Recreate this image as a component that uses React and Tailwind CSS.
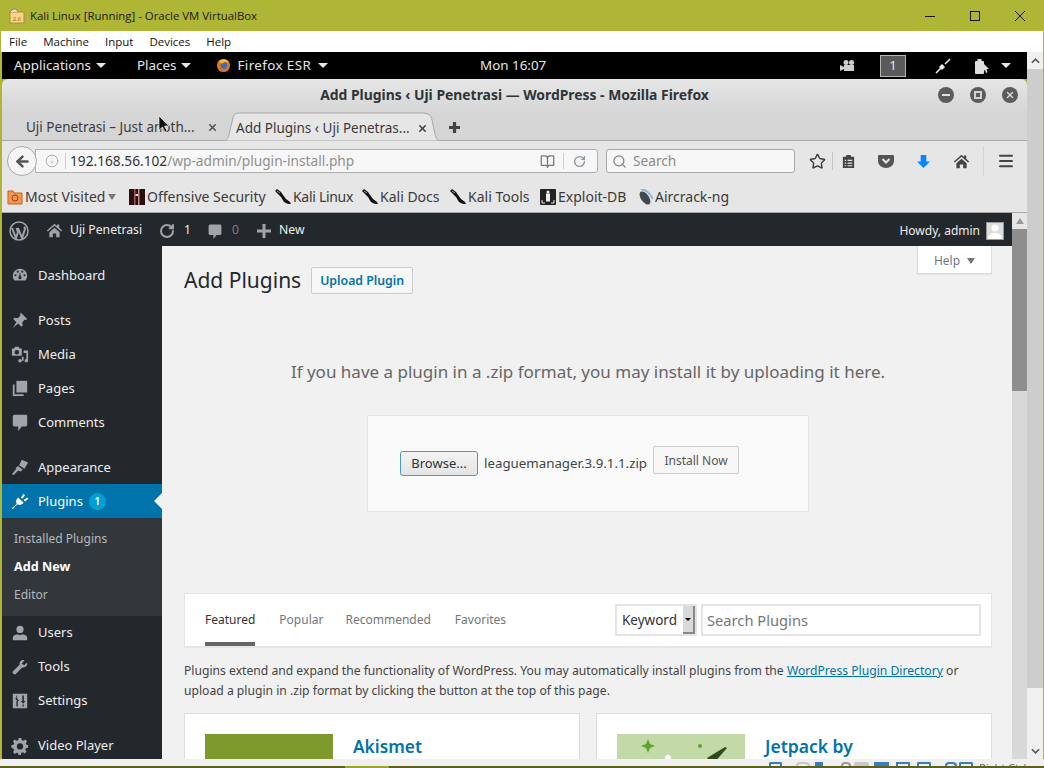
import { ArrowLeft, Info, RotateCw, Search, Star, Menu, BookOpen, X } from 'lucide-react'

const FONT = "font-['Noto_Sans',sans-serif]"

const MENU_TOP = [
  { label: 'Dashboard', icon: 'dash', gap: 'mb-[11px]' },
  { label: 'Posts', icon: 'pin' },
  { label: 'Media', icon: 'media' },
  { label: 'Pages', icon: 'pages' },
  { label: 'Comments', icon: 'comment', gap: 'mb-[11px]' },
  { label: 'Appearance', icon: 'brush' },
]

const MENU_BOTTOM = [
  { label: 'Users', icon: 'user' },
  { label: 'Tools', icon: 'wrench' },
  { label: 'Settings', icon: 'sliders', gap: 'mb-[11px]' },
  { label: 'Video Player', icon: 'gear' },
]

const BOOKMARKS = [
  { label: 'Offensive Security', icon: 'offsec', w: 'w-[146px]' },
  { label: 'Kali Linux', icon: 'kali', w: 'w-[87px] tracking-[-0.3px]' },
  { label: 'Kali Docs', icon: 'kali', w: 'w-[88px]' },
  { label: 'Kali Tools', icon: 'kali', w: 'w-[90px]' },
  { label: 'Exploit-DB', icon: 'exploit', w: 'w-[97px]' },
  { label: 'Aircrack-ng', icon: 'air', w: 'w-[90px]' },
]

const HOUSE = 'M10 2l3 2.600V3h2.500v3.800L19 10l-1.200 1.200L10 4.500l-7.800 6.700L1 10zM4 12l6-5.200 6 5.200v6h-4v-4.500H8V18H4z'

function WpIcon({ name }) {
  const cls = 'w-[18px] h-[18px] fill-[#a0a5aa]'
  if (name === 'dash') return (
    <svg viewBox="0 0 20 20" className={cls}><path fillRule="evenodd" d="M10 3a8 8 0 0 0-8 8c0 2 .7 3.800 1.900 5h12.200A8 8 0 0 0 18 11a8 8 0 0 0-8-8zm-5 8.500a1.200 1.200 0 1 1 0-2.400 1.200 1.200 0 0 1 0 2.400zM7.500 7.500a1.200 1.200 0 1 1 0-2.400 1.200 1.200 0 0 1 0 2.400zM10 14.800a1.800 1.800 0 0 1-1-3.300l1-4.500.9 4.500a1.800 1.800 0 0 1-.9 3.300zM12.500 7.500a1.200 1.200 0 1 1 0-2.400 1.200 1.200 0 0 1 0 2.400zM15 11.500a1.200 1.200 0 1 1 0-2.400 1.200 1.200 0 0 1 0 2.400z" /></svg>
  )
  if (name === 'pin') return (
    <svg viewBox="0 0 20 20" className={cls}><path d="M11 2l7 7-1.500 1-1-.5-3 3 .5 3.500-1.500 1.500-3.500-3.500L2 19l4-6.500L2.500 9 4 7.500l3.500.5 3-3-.5-1z" /></svg>
  )
  if (name === 'media') return (
    <svg viewBox="0 0 20 20" className={cls}><path fillRule="evenodd" d="M1 4h2.500l1-2h4l1 2H12v8H1V4zm5.500 1.500a2.500 2.500 0 1 0 0 5 2.500 2.500 0 0 0 0-5z" /><path d="M14 6h5v11.500a2 2 0 1 1-2-2V9h-3zM8 17.500a2 2 0 1 1 4 0 2 2 0 0 1-4 0zM12 13h2v4.500h-2z" /></svg>
  )
  if (name === 'pages') return (
    <svg viewBox="0 0 20 20" className={cls}><path d="M6 2h12v13H6z" /><path d="M2 6h2v11h10v2H2z" /></svg>
  )
  if (name === 'comment') return (
    <svg viewBox="0 0 20 20" className={cls}><path d="M4 2h13a2 2 0 0 1 1 2v9a2 2 0 0 1-2 2h-4l-4 5v-5H4a2 2 0 0 1-2-2V4a2 2 0 0 1 2-2z" /></svg>
  )
  if (name === 'brush') return (
    <svg viewBox="0 0 20 20" className={cls}><path d="M12 2l7 3-4 7-6-4zM8 9l5 4-2 2-3-1-5 5-2-1 5-6-1-1z" /></svg>
  )
  if (name === 'user') return (
    <svg viewBox="0 0 20 20" className={cls}><circle cx="10" cy="6" r="4" /><path d="M2 18v-3c0-2 3-3 5-3.500 1.500 1 4.500 1 6 0 2 .5 5 1.500 5 3.500v3z" /></svg>
  )
  if (name === 'wrench') return (
    <svg viewBox="0 0 20 20" className={cls}><path d="M18 5l-3.500 3L12 6l3-3.500C12 1.500 9 4 9.500 7.500L2 15c-1 1.500 1.500 4 3 3l7.500-7.500C16 11 18.800 8 18 5z" /></svg>
  )
  if (name === 'sliders') return (
    <svg viewBox="0 0 20 20" className={cls}><path fillRule="evenodd" d="M2 2h16v16H2zM6 4v3H4.500L7 10l-1 0v6h1.500v-6H9L6.800 7V4zm6.500 0v6H11l2.500 3 2.500-3h-1.700V4zm.3 10v2h1.400v-2z" /></svg>
  )
  return (
    <svg viewBox="0 0 20 20" className={cls}><path fillRule="evenodd" d="M8.500 1h3l.5 2.500 1.600.7 2.200-1.400 2 2-1.400 2.200.7 1.600L19 9v3l-2.400.5-.7 1.600 1.400 2.200-2 2-2.200-1.400-1.600.7-.5 2.400h-3L8 18.100l-1.600-.7-2.200 1.400-2-2 1.400-2.200-.7-1.600L.5 12V9l2.400-.5.7-1.600-1.400-2.200 2-2 2.200 1.400L8 3.500zM10 7a3.500 3.500 0 1 0 0 7 3.500 3.500 0 0 0 0-7z" /></svg>
  )
}

function BookmarkIcon({ name }) {
  if (name === 'offsec') return (
    <svg viewBox="0 0 16 16" className="w-4 h-4 mr-[2px] shrink-0"><rect width="16" height="16" fill="#2a0f10" /><rect x="5" width="1.500" height="16" fill="#9c5a5a" /><rect x="9" width="1.500" height="16" fill="#c98a8a" /><rect x="6.500" y="5" width="2.500" height="2" fill="#e8d8d8" /></svg>
  )
  if (name === 'kali') return (
    <svg viewBox="0 0 16 16" className="w-4 h-4 mr-[2px] shrink-0"><path d="M0 2l2-2 4 3 2 3 3 4 4 3 1 2-3 0-4-2-3-5-3-3z" fill="#111" /><path d="M2 2l3 2" stroke="#999" strokeWidth="1" /></svg>
  )
  if (name === 'exploit') return (
    <svg viewBox="0 0 16 16" className="w-4 h-4 mr-[2px] shrink-0"><rect width="16" height="16" rx="1" fill="#222" /><rect x="6" y="4.500" width="4" height="8" fill="#eee" /><circle cx="8" cy="3" r="1.500" fill="#eee" /><path d="M2 11v3h3M14 11v3h-3" stroke="#eee" fill="none" /></svg>
  )
  return (
    <svg viewBox="0 0 16 16" className="w-4 h-4 mr-[2px] shrink-0"><ellipse cx="8" cy="9" rx="4" ry="7.500" transform="rotate(-35 8 9)" fill="#3f4a50" /><path d="M4 0c5 1 9 4 12 10" stroke="#8fb8e0" strokeWidth="2" fill="none" /></svg>
  )
}

function Caret({ className = '' }) {
  return <span className={`w-0 h-0 border-x-[5px] border-x-transparent border-t-[5px] border-t-[#e6e6e6] ${className}`} />
}

function TitleBar() {
  return (
    <div className="h-[31px] bg-[#afb535] flex items-center shrink-0 pl-[9px] pr-[19px] font-['Open_Sans',sans-serif] text-[11.4px] text-[#1a1a1a]">
      <svg viewBox="0 0 16 16" className="w-4 h-4 mr-[5px]">
        <rect x="1" y="4" width="14" height="11" fill="#f4d58a" stroke="#b8873a" />
        <path d="M1 4l3-3h3l2 3" fill="#ddd" stroke="#888" />
        <text x="8" y="13" textAnchor="middle" fontSize="6" fill="#a35a00">2.6</text>
      </svg>
      <span>Kali Linux [Running] - Oracle VM VirtualBox</span>
      <div className="ml-auto flex items-center gap-[35px]">
        <svg viewBox="0 0 10 10" className="w-[10px] h-[10px]"><path d="M0 5.500h10" stroke="#111" strokeWidth="1" /></svg>
        <svg viewBox="0 0 10 10" className="w-[10px] h-[10px]"><rect x="0.500" y="0.500" width="9" height="9" fill="none" stroke="#111" strokeWidth="1" /></svg>
        <svg viewBox="0 0 10 10" className="w-[10px] h-[10px]"><path d="M0 0l10 10M10 0L0 10" stroke="#111" strokeWidth="1" /></svg>
      </div>
    </div>
  )
}

function VmMenu() {
  return (
    <div className="h-[21px] bg-white ml-[1px] mr-[1px] flex items-center shrink-0 pl-[8px] gap-[16px] font-['Open_Sans',sans-serif] text-[11.5px] text-[#111]">
      {['File', 'Machine', 'Input', 'Devices', 'Help'].map(m => <span key={m}>{m}</span>)}
    </div>
  )
}

function GnomePanel() {
  return (
    <div className="relative h-[27px] bg-black flex items-center shrink-0 pl-[12px] pr-[16px] text-[#e6e6e6] text-[13.4px]">
      <span>Applications</span>
      <Caret className="ml-[5px]" />
      <span className="ml-[31px]">Places</span>
      <Caret className="ml-[5px]" />
      <svg viewBox="0 0 16 16" className="w-[15px] h-[15px] ml-[25px] mr-[6px]">
        <circle cx="8" cy="8" r="7" fill="#e8701a" />
        <circle cx="8.500" cy="8" r="3.600" fill="#3b6fb5" />
        <path d="M3 4c3-4 9-3 11 1-3-2-6-1-7 1z" fill="#f7b733" />
      </svg>
      <span className="tracking-[0.4px]">Firefox ESR</span>
      <Caret className="ml-[7px]" />
      <span className="absolute left-[478px] top-[3px]">Mon 16:07</span>
      <div className="ml-auto flex items-center">
        <svg viewBox="0 0 16 16" className="w-4 h-4 fill-[#cfcfcf] mr-[24px]">
          <circle cx="6" cy="4.500" r="2.500" /><circle cx="11.500" cy="4.500" r="2.500" /><rect x="4" y="7" width="10" height="6" /><path d="M0 7l4 2v2l-4 2z" />
        </svg>
        <span className="w-[26px] h-[22px] border border-[#b5b5b5] bg-[#5a5a5a] flex items-center justify-center text-[13px] mr-[29px]">1</span>
        <svg viewBox="0 0 16 16" className="w-4 h-4 mr-[23px]">
          <path d="M1 15l5-5M10 6l5-5" stroke="#eee" strokeWidth="1.500" /><path d="M4 9l3 3 3-3-3-3z" fill="#eee" />
        </svg>
        <svg viewBox="0 0 16 16" className="w-4 h-4 mr-[11px]">
          <rect x="1" y="3" width="9" height="13" rx="1" fill="#ddd" /><rect x="3.500" y="1" width="4" height="2" fill="#ddd" /><path d="M10 6l5 5-2.500.3 1 3-1.500.6-1-3-1.500 1z" fill="#ddd" />
        </svg>
        <Caret />
      </div>
    </div>
  )
}

function FirefoxChrome() {
  return (
    <div className="shrink-0">
      <div className="h-[32px] rounded-t-[6px] bg-gradient-to-b from-[#e6e6e6] to-[#d6d6d6] relative flex items-center justify-center font-bold text-[13.9px] text-[#2e3436]">
        Add Plugins ‹ Uji Penetrasi — WordPress - Mozilla Firefox
        <div className="absolute right-[9px] top-[8px] flex gap-[16px]">
          <span className="w-4 h-4 rounded-full bg-[#5c5c5c] flex items-center justify-center"><span className="w-2 h-[2px] bg-[#e0e0e0]" /></span>
          <span className="w-4 h-4 rounded-full bg-[#5c5c5c] flex items-center justify-center"><span className="w-[8px] h-[8px] border-2 border-[#d0d0d0]" /></span>
          <span className="w-4 h-4 rounded-full bg-[#5c5c5c] flex items-center justify-center"><X size={10} strokeWidth={3} className="text-[#e0e0e0]" /></span>
        </div>
      </div>
      <div className="h-[30px] bg-[#d5d5d5] border-b border-[#a8a8a8] flex items-end text-[13.5px] text-[#3a3a3a]">
        <div className="w-[222px] h-[29px] pt-[4px] flex items-center pl-[24px] pr-[6px] justify-between">
          <span>Uji Penetrasi – Just anoth...</span>
          <X size={11} strokeWidth={3.500} className="text-[#555]" />
        </div>
        <div className="relative w-[216px] h-[30px] pt-[4px] -mb-px flex items-center pl-[12px] pr-[12px] justify-between">
          <svg viewBox="0 0 216 30" className="absolute inset-0 w-[216px] h-[30px]">
            <path d="M0 30C4 29 5 25 6 19L9 7C10 3 12 2 16 2L198 2C204 2 207 4 208 9L211 23C212 28 214 30 216 30Z" fill="#e6e6e6" stroke="#a8a8a8" />
          </svg>
          <span className="relative">Add Plugins ‹ Uji Penetras...</span>
          <X size={11} strokeWidth={3.500} className="relative text-[#444]" />
        </div>
        <div className="h-[29px] pt-[4px] flex items-center pl-[9px]">
          <svg viewBox="0 0 12 12" className="w-[11px] h-[11px]"><path d="M6 0v12M0 6h12" stroke="#444" strokeWidth="3.500" /></svg>
        </div>
      </div>
      <div className="h-[38px] pt-[2px] bg-[#e6e6e6] flex items-center pl-[5px] pr-[10px] text-[13.7px]">
        <span className="w-[30px] h-[30px] rounded-full border border-[#a8a8a8] bg-[#f5f5f5] flex items-center justify-center z-10 shrink-0"><ArrowLeft size={17} strokeWidth={3.500} className="text-[#555]" /></span>
        <div className="w-[563px] h-[24px] -ml-[2px] bg-[#f7f7f7] border border-[#b0b0b0] rounded-r-[3px] flex items-center pl-[9px]">
          <Info size={14} className="text-[#999] mr-[6px]" strokeWidth={1.300} />
          <span className="w-px h-[16px] bg-[#ccc] mr-[4px]" />
          <span className="text-[#333]">192.168.56.102</span>
          <span className="text-[#909090]">/wp-admin/plugin-install.php</span>
          <BookOpen size={15} className="ml-auto text-[#777] mr-[8px]" />
          <span className="w-px h-[16px] bg-[#ccc] mr-[9px]" />
          <RotateCw size={13} strokeWidth={2.500} className="text-[#8a97a5] mr-[11px]" />
        </div>
        <div className="w-[189px] h-[24px] ml-[8px] bg-[#f7f7f7] border border-[#a8a8a8] rounded-[3px] flex items-center pl-[5px] text-[#8a8a8a]">
          <Search size={15} className="text-[#808080] mr-[6px]" strokeWidth={2} />
          <span>Search</span>
        </div>
        <Star size={17} strokeWidth={2} className="ml-[14px] text-[#3c3c3c]" />
        <span className="w-px h-[18px] bg-[#c4c4c4] ml-[6px]" />
        <svg viewBox="0 0 16 16" className="w-[15px] h-[15px] ml-[8px]"><path fillRule="evenodd" fill="#444" d="M2 3h3l1-2h4l1 2h3v12H2zM4 6v1.500h1.500V6zm3 0v1.500h5V6zM4 9v1.500h1.500V9zm3 0v1.500h5V9zm-3 3v1h1.500v-1zm3 0v1h5v-1z" /></svg>
        <svg viewBox="0 0 16 16" className="w-[16px] h-[16px] ml-[22px]"><path fill="#555" d="M1 2h14a1 1 0 0 1 1 1v5a8 7 0 0 1-16 0V3a1 1 0 0 1 1-1z" /><path d="M4.500 6L8 9.500 11.500 6" stroke="#e6e6e6" strokeWidth="2" fill="none" /></svg>
        <svg viewBox="0 0 16 16" className="w-[15px] h-[15px] ml-[22px]"><path fill="#0a84ff" d="M5 1h6v7h4l-7 7-7-7h4z" /></svg>
        <svg viewBox="0 0 20 20" className="w-[17px] h-[17px] ml-[22px] fill-[#444]"><path d={HOUSE} /></svg>
        <span className="w-px h-[30px] bg-[#d4d4d4] ml-[13px]" />
        <Menu size={18} strokeWidth={2.600} className="ml-[13px] text-[#444]" />
      </div>
      <div className="h-[34px] pt-[2px] bg-[#e6e6e6] border-b border-[#a8a8a8] flex items-center pl-[5px] text-[14px] text-[#3a3a3a] whitespace-nowrap">
        <div className="w-[122px] flex items-center">
          <svg viewBox="0 0 16 16" className="w-4 h-4 mr-[2px]"><path fill="#f09a4a" stroke="#c9601a" d="M1 2h5l1 2h8v11H1z" /><circle cx="8" cy="9" r="3" fill="none" stroke="#a33" /></svg>
          Most Visited
          <span className="ml-[3px] w-0 h-0 border-x-[4px] border-x-transparent border-t-[6px] border-t-[#777]" />
        </div>
        {BOOKMARKS.map(b => (
          <div key={b.label} className={`flex items-center ${b.w}`}>
            <BookmarkIcon name={b.icon} />
            {b.label}
          </div>
        ))}
      </div>
    </div>
  )
}

function AdminBar() {
  return (
    <div className="h-[33px] pt-[2px] bg-[#23282d] flex items-center shrink-0 pl-[7px] text-[12.2px] text-[#eee]">
      <svg viewBox="0 0 20 20" className="w-[20px] h-[20px] mr-[17px]">
        <circle cx="10" cy="10" r="9" fill="none" stroke="#a0a5aa" strokeWidth="1.500" />
        <path d="M3 7l4 10 2-6-1.500-4M9 7l4 10 3-9c0-1-.5-1.500-1-2" fill="none" stroke="#a0a5aa" strokeWidth="2" />
      </svg>
      <svg viewBox="0 0 20 20" className="w-[17px] h-[17px] mr-[7px] fill-[#a0a5aa]"><path d={HOUSE} /></svg>
      <span>Uji Penetrasi</span>
      <RotateCw size={16} strokeWidth={3} className="text-[#a0a5aa] ml-[17px] mr-[9px]" />
      <span>1</span>
      <svg viewBox="0 0 20 20" className="w-[16px] h-[16px] ml-[16px] mr-[9px] fill-[#a0a5aa]"><path d="M4 2h13a2 2 0 0 1 1 2v9a2 2 0 0 1-2 2h-4l-4 5v-5H4a2 2 0 0 1-2-2V4a2 2 0 0 1 2-2z" /></svg>
      <span className="text-[#7a7f84]">0</span>
      <svg viewBox="0 0 14 14" className="w-[14px] h-[14px] ml-[18px] mr-[8px]"><path d="M7 0v14M0 7h14" stroke="#a0a5aa" strokeWidth="3" /></svg>
      <span>New</span>
      <span className="ml-auto mr-[6px] text-[12px]">Howdy, admin</span>
      <span className="w-[18px] h-[18px] bg-[#ddd] border border-[#999] mr-[8px] flex items-end justify-center overflow-hidden">
        <svg viewBox="0 0 16 16" className="w-4 h-4 fill-white"><circle cx="8" cy="5" r="3.500" /><path d="M1 16c0-4 3-6 7-6s7 2 7 6z" /></svg>
      </span>
    </div>
  )
}

function MenuItem({ item, shift = '' }) {
  return (
    <div className={`h-[34px] flex items-center pl-[9px] text-[13px] text-[#eee] ${item.gap || ''}`}>
      <span className="w-[27px] flex"><WpIcon name={item.icon} /></span>
      <span className={shift}>{item.label}</span>
    </div>
  )
}

function Sidebar() {
  return (
    <div className="w-[160px] bg-[#23282d] shrink-0 pt-[12px]">
      {MENU_TOP.map(m => <MenuItem key={m.label} item={m} shift="translate-y-px" />)}
      <div className="relative h-[34px] bg-[#0073aa] flex items-center pl-[9px] text-[13px] text-white">
        <svg viewBox="0 0 20 20" className="w-[18px] h-[18px] mr-[9px] fill-white">
          <path d="M8 6l6 6c-2 2.500-5 3-7 1.500L2 19l-1-1 5.500-5C5 11 5.500 8 8 6z" />
          <path d="M11 6l3-4 1.500 1.500-3 4zM14 9l4-3 1.500 1.500-4 3z" />
        </svg>
        <span className="translate-y-px">Plugins</span>
        <span className="ml-[6px] w-[17px] h-[17px] rounded-full bg-[#00a0d2] text-[10px] font-semibold flex items-center justify-center">1</span>
        <span className="absolute right-0 top-[9px] w-0 h-0 border-y-[8px] border-y-transparent border-r-[8px] border-r-[#f1f1f1]" />
      </div>
      <div className="h-[98px] bg-[#32373c] pt-[7px] text-[12px] text-[#b4b9be] pl-[12px]">
        <div className="h-[28px] flex items-center">Installed Plugins</div>
        <div className="h-[28px] flex items-center font-bold text-[12.6px] text-white">Add New</div>
        <div className="h-[28px] flex items-center">Editor</div>
      </div>
      {MENU_BOTTOM.map(m => <MenuItem key={m.label} item={m} />)}
    </div>
  )
}

function Content() {
  return (
    <div className="flex-1 min-w-0 bg-[#f1f1f1] overflow-hidden pl-[22px] pr-[20px] text-[#444]">
      <div className="flex items-start">
        <h1 className="text-[21px] text-[#23282d] pt-[19px] leading-[30px]">Add Plugins</h1>
        <span className="ml-[10px] mt-[21px] h-[27px] pt-[2px] px-[8px] bg-[#f7f7f7] border border-[#ccc] rounded-[2px] text-[12.3px] font-semibold text-[#0073aa] flex items-center">Upload Plugin</span>
        <span className="ml-auto w-[75px] h-[28px] pt-[2px] bg-white border border-t-0 border-[#ddd] flex items-center justify-center text-[12px] text-[#72777c] shadow-[0_1px_1px_rgba(0,0,0,0.05)]">
          Help
          <span className="ml-[7px] w-0 h-0 border-x-[4px] border-x-transparent border-t-[6px] border-t-[#72777c]" />
        </span>
      </div>
      <p className="mt-[65px] text-center text-[17px] leading-[24px] text-[#666]">If you have a plugin in a .zip format, you may install it by uploading it here.</p>
      <div className="mx-auto mt-[31px] w-[442px] h-[97px] bg-[#fafafa] border border-[#e5e5e5] flex items-start pl-[32px] pt-[30px] text-[13.3px]">
        <span className="mt-[5px] w-[78px] h-[25px] rounded-[3px] border border-[#4a9ac9] bg-gradient-to-b from-[#f4f4f4] to-[#e4e4e4] flex items-center justify-center text-[#2e3436] text-[13px]">Browse...</span>
        <span className="mt-[8px] ml-[6px] text-[#444]">leaguemanager.3.9.1.1.zip</span>
        <span className="ml-[6px] w-[86px] h-[28px] pt-[1px] rounded-[2px] border border-[#ccc] bg-[#f7f7f7] flex items-center justify-center text-[12px] text-[#555]">Install Now</span>
      </div>
      <div className="mt-[81px] h-[54px] bg-white border border-[#e5e5e5] shadow-[0_1px_1px_rgba(0,0,0,0.04)] flex items-center pl-[20px] pr-[10px] text-[12px]">
        <span className="relative h-full flex items-center text-[#333]">Featured<span className="absolute left-0 right-0 bottom-0 h-[4px] bg-[#666]" /></span>
        <span className="ml-[24px] text-[#72777c]">Popular</span>
        <span className="ml-[22px] text-[#72777c]">Recommended</span>
        <span className="ml-[24px] text-[#72777c]">Favorites</span>
        <span className="ml-auto w-[82px] h-[32px] bg-white border-2 border-[#e4e4e4] flex items-center pl-[5px] text-[13.5px] text-[#333] relative">
          Keyword
          <span className="absolute right-0 top-0 bottom-0 w-[12px] bg-[#d9d9d9] border-r-2 border-b-2 border-[#888] flex items-center justify-center">
            <span className="w-0 h-0 border-x-[3px] border-x-transparent border-t-[3px] border-t-black" />
          </span>
        </span>
        <span className="ml-[4px] w-[280px] h-[32px] pt-[1px] bg-white border-2 border-[#e4e4e4] flex items-center pl-[4px] text-[14.7px] text-[#777]">Search Plugins</span>
      </div>
      <p className="mt-[14px] text-[12.15px] leading-[20px] text-[#444] whitespace-nowrap">
        Plugins extend and expand the functionality of WordPress. You may automatically install plugins from the <span className="text-[#0073aa] underline">WordPress Plugin Directory</span> or<br />
        upload a plugin in .zip format by clicking the button at the top of this page.
      </p>
      <div className="mt-[12px] grid grid-cols-2 gap-[16px]">
        <div className="h-[60px] bg-white border border-[#ddd] flex pl-[20px] pt-[20px]">
          <div className="w-[128px] h-[128px] bg-[#7e9a2c] shrink-0" />
          <span className="ml-[20px] text-[17.3px] font-semibold text-[#0073aa]">Akismet</span>
        </div>
        <div className="h-[60px] bg-white border border-[#ddd] flex pl-[20px] pt-[20px]">
          <div className="w-[128px] h-[128px] bg-[#c3d9a8] shrink-0 overflow-hidden">
            <svg viewBox="0 0 128 30" className="w-[128px] h-[30px]">
              <path d="M31 5l2 5 5 2-5 2-2 5-2-5-5-2 5-2z" fill="#5da52f" />
              <circle cx="83" cy="12" r="2" fill="#5da52f" />
              <path d="M90 24l18-11 2 1-14 16z" fill="#2d4b1f" />
              <circle cx="51" cy="24" r="3" fill="#fff" />
            </svg>
          </div>
          <span className="ml-[20px] -mt-[1px] text-[17.5px] font-semibold text-[#0073aa]">Jetpack by</span>
        </div>
      </div>
    </div>
  )
}

function InnerScrollbar() {
  return (
    <div className="w-[15px] bg-[#d8d8d8] shrink-0 flex flex-col">
      <div className="h-[16px] bg-[#e6e6e6] flex items-center justify-center">
        <span className="w-0 h-0 border-x-[4px] border-x-transparent border-b-[6px] border-b-[#999]" />
      </div>
      <div className="h-[162px] bg-[#8e8e8e]" />
    </div>
  )
}

function VmScrollbar() {
  return (
    <div className="w-[16px] mr-[1px] bg-[#f0f0f0] shrink-0 flex flex-col">
      <div className="h-[17px] flex items-center justify-center">
        <svg viewBox="0 0 10 6" className="w-[9px] h-[6px]"><path d="M1 5l4-4 4 4" fill="none" stroke="#555" strokeWidth="1.800" /></svg>
      </div>
      <div className="h-[619px] bg-[#cdcdcd]" />
      <div className="mt-auto h-[17px] flex items-center justify-center">
        <svg viewBox="0 0 10 6" className="w-[9px] h-[6px]"><path d="M1 1l4 4 4-4" fill="none" stroke="#555" strokeWidth="1.800" /></svg>
      </div>
    </div>
  )
}

function StatusBar() {
  return (
    <div className="shrink-0">
      <div className="h-[7px] bg-[#f0f0f0] flex items-start pt-[3px] pl-[769px] overflow-hidden">
        <span className="w-[13px] h-[4px] border-2 border-b-0 border-[#3b7bc4] rounded-t-[2px]" />
        <span className="ml-[14px] w-[14px] h-[4px] border-2 border-b-0 border-[#c8c8c8] rounded-t-full" />
        <span className="ml-[5px] w-[8px] h-[4px] bg-[#3b7bc4]" />
        <span className="ml-[18px] w-[10px] h-[4px] border-2 border-b-0 border-[#9a9a9a] rounded-t-full" />
        <span className="ml-[3px] w-[15px] h-[4px] bg-[#c8c8c8] rounded-t-[2px]" />
        <span className="ml-[5px] w-[15px] h-[4px] bg-[#3b7bc4]" />
        <span className="ml-[7px] w-[14px] h-[4px] border-2 border-b-0 border-[#3b7bc4]" />
        <span className="ml-[7px] w-[14px] h-[4px] border-2 border-b-0 border-[#3b7bc4] rounded-t-[2px]" />
        <span className="ml-[14px] w-[12px] h-[4px] border-2 border-b-0 border-[#3b7bc4] rounded-t-full" />
        <span className="ml-[2px] w-[14px] h-[4px] border-2 border-b-0 border-[#3b7bc4] rounded-t-[2px]" />
        <span className="ml-[6px] text-[11px] leading-[12px] text-[#666] font-['Open_Sans',sans-serif] whitespace-nowrap">Right Ctrl</span>
      </div>
      <div className="h-[2px] flex bg-[#5c6120]">
        <span className="ml-[345px] w-[44px] bg-[#9ea32d]" />
      </div>
    </div>
  )
}

export default function App() {
  return (
    <div className={`${FONT} relative w-[1044px] h-[768px] overflow-hidden bg-[#afb535] flex flex-col`}>
      <TitleBar />
      <VmMenu />
      <div className="flex flex-1 min-h-0 pl-[2px]">
        <div className="flex-1 min-w-0 flex flex-col">
          <GnomePanel />
          <FirefoxChrome />
          <div className="flex flex-1 min-h-0">
            <div className="flex-1 min-w-0 flex flex-col">
              <AdminBar />
              <div className="flex flex-1 min-h-0">
                <Sidebar />
                <Content />
              </div>
            </div>
            <InnerScrollbar />
          </div>
        </div>
        <VmScrollbar />
      </div>
      <StatusBar />
      <svg viewBox="0 0 12 18" className="absolute left-[158px] top-[115px] w-[12px] h-[18px]"><path d="M1 1v14l3.500-3 2.500 5 2-1-2.500-5H11z" fill="#111" stroke="#fff" strokeWidth="0.600" /></svg>
    </div>
  )
}
